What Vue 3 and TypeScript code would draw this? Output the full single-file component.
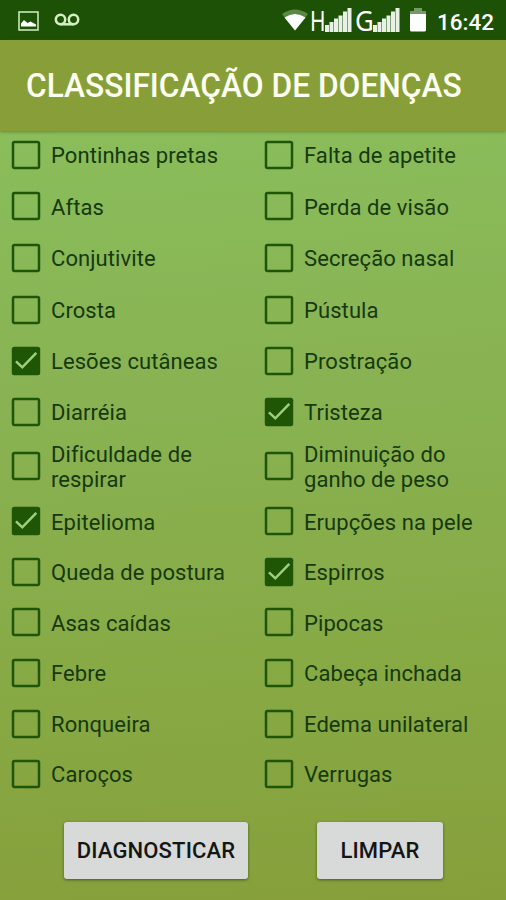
<script setup lang="ts">
import { reactive } from 'vue'

interface Symptom {
  label: string
  checked: boolean
}

const item = (label: string, checked = false): Symptom => ({ label, checked })

const symptoms = reactive<Symptom[]>([
  item('Pontinhas pretas'), item('Falta de apetite'),
  item('Aftas'), item('Perda de visão'),
  item('Conjutivite'), item('Secreção nasal'),
  item('Crosta'), item('Pústula'),
  item('Lesões cutâneas', true), item('Prostração'),
  item('Diarréia'), item('Tristeza', true),
  item('Dificuldade de respirar'), item('Diminuição do ganho de peso'),
  item('Epitelioma', true), item('Erupções na pele'),
  item('Queda de postura'), item('Espirros', true),
  item('Asas caídas'), item('Pipocas'),
  item('Febre'), item('Cabeça inchada'),
  item('Ronqueira'), item('Edema unilateral'),
  item('Caroços'), item('Verrugas'),
])

function clearAll(): void {
  symptoms.forEach((s) => { s.checked = false })
}
</script>

<template>
  <div class="screen">
    <div class="status">
      <svg class="picture" viewBox="0 0 21 20">
        <rect x="1" y="1" width="19" height="18" fill="none" stroke="#c9e8b8" stroke-width="1.6" />
        <path d="M3 15.500V12.500L6 9L9.500 12L12.500 10.500L18 13.500V15.500Z" fill="#fff" />
      </svg>
      <svg class="voicemail" viewBox="0 0 26 14">
        <g fill="none" stroke="#d5efc5" stroke-width="2.5">
          <circle cx="6.500" cy="6.500" r="4.700" />
          <circle cx="19.500" cy="6.500" r="4.700" />
          <path d="M6.500 11.300H19.500" />
        </g>
      </svg>
      <span class="spacer"></span>
      <svg class="wifi" viewBox="0 0 26 22">
        <path d="M0 5Q13 -4 26 5L13 21.500Z" fill="#5d8747" />
        <path d="M2.500 8.500Q13 1.500 23.500 8.500L13 21.500Z" fill="#fff" />
      </svg>
      <span class="net net-h">H</span>
      <svg class="signal" viewBox="0 0 27 26">
        <path d="M0 25V18H4V25ZM4.500 25V15H8.500V25ZM9 25V11.500H13V25ZM13.500 25V8.500H17.500V25ZM18 25V4.500H22V25ZM22.500 25V1H26.500V25Z" fill="#e9f0e5" />
      </svg>
      <span class="net net-g">G</span>
      <svg class="signal" viewBox="0 0 27 26">
        <path d="M0 25V18H4V25ZM4.500 25V15H8.500V25ZM9 25V11.500H13V25ZM13.500 25V8.500H17.500V25ZM18 25V4.500H22V25ZM22.500 25V1H26.500V25Z" fill="#e9f0e5" />
      </svg>
      <svg class="battery" viewBox="0 0 16 24">
        <path d="M4 0H12V3H16V6H0V3H4Z" fill="#76996a" />
        <path d="M0 6H16V22Q16 23.500 14.500 23.500H1.500Q0 23.500 0 22Z" fill="#fff" />
      </svg>
      <span class="clock">16:42</span>
    </div>

    <header class="bar"><h1>CLASSIFICAÇÃO DE DOENÇAS</h1></header>

    <main class="grid">
      <label v-for="s in symptoms" :key="s.label" class="item">
        <input v-model="s.checked" type="checkbox" class="native" />
        <svg class="box" viewBox="0 0 30 30">
          <rect v-if="!s.checked" x="2" y="2" width="26" height="26" rx="1.500" fill="none" stroke="#1f5606" stroke-width="2.500" />
          <template v-else>
            <rect x="0.800" y="0.800" width="28.400" height="28.400" rx="2.500" fill="#1f5606" />
            <path d="M5 15.300L11.300 21.300L25.300 6.800" fill="none" stroke="#9fce7c" stroke-width="2.500" />
          </template>
        </svg>
        <span class="text">{{ s.label }}</span>
      </label>
    </main>

    <footer class="actions">
      <button class="btn diagnose" type="button">DIAGNOSTICAR</button>
      <button class="btn clear" type="button" @click="clearAll">LIMPAR</button>
    </footer>
  </div>
</template>

<style>
body {
  margin: 0;
}
</style>

<style scoped>
.screen {
  width: 506px;
  height: 900px;
  overflow: hidden;
  display: flex;
  flex-direction: column;
  box-sizing: border-box;
  font-family: Roboto, "Liberation Sans", sans-serif;
  background: linear-gradient(176deg, #8abd5b 14%, #89b353 42%, #87a944 75%, #869f3b 100%);
}
.status {
  height: 40px;
  flex: none;
  display: flex;
  align-items: center;
  background: #1d5206;
  color: #fff;
  padding: 0 12px 0 18px;
}
.status svg {
  flex: none;
}
.picture {
  width: 21px;
  height: 20px;
  margin-top: 1px;
}
.voicemail {
  width: 26px;
  height: 14px;
  margin-left: 15px;
}
.spacer {
  flex: 1;
}
.wifi {
  width: 26px;
  height: 22px;
}
.net {
  font-family: "Noto Sans", sans-serif;
  font-size: 28px;
  line-height: 40px;
  transform-origin: left center;
}
.net-h {
  width: 15px;
  margin-left: 2px;
  transform: scaleX(0.75);
}
.net-g {
  width: 18px;
  margin-left: 3px;
  transform: scaleX(0.92);
}
.signal {
  width: 27px;
  height: 26px;
}
.battery {
  width: 16px;
  height: 24px;
  margin-left: 10px;
}
.clock {
  width: 57px;
  margin-left: 11px;
  padding-top: 3px;
  font-size: 22.500px;
  font-weight: 500;
  line-height: 40px;
  white-space: nowrap;
}
.bar {
  height: 91px;
  flex: none;
  display: flex;
  align-items: center;
  padding-left: 26px;
  background: #889f39;
  box-shadow: 0 1px 3px rgba(70, 90, 20, 0.5);
}
h1 {
  margin: 0;
  font-size: 33px;
  font-weight: 500;
  line-height: 40px;
  color: #fdfff0;
  white-space: nowrap;
  transform: scaleX(0.96);
  transform-origin: left center;
}
.grid {
  display: grid;
  flex: none;
  grid-template-columns: 253px 253px;
  grid-template-rows: repeat(4, 51.6px) 51px 50.6px 59px repeat(6, 50.6px);
  margin-top: -2px;
}
.item {
  display: flex;
  align-items: center;
  padding-left: 11px;
}
.native {
  appearance: none;
  width: 0;
  height: 0;
  margin: 0;
}
.box {
  width: 30px;
  height: 30px;
  flex: none;
}
.text {
  width: 180px;
  margin-left: 10px;
  padding-top: 2px;
  font-size: 22px;
  line-height: 25.5px;
  letter-spacing: 0.08px;
  color: #16390f;
}
.actions {
  display: flex;
  flex: none;
  margin-top: 22px;
  padding-left: 64px;
}
.btn {
  height: 57px;
  box-sizing: border-box;
  padding: 1px 0 0;
  border: 0;
  border-radius: 3px;
  background: #d8dad9;
  box-shadow: 0 1px 3px rgba(40, 55, 10, 0.65);
  font-family: inherit;
  font-size: 22px;
  font-weight: 500;
  letter-spacing: 0.15px;
  color: #141615;
}
.diagnose {
  width: 184px;
}
.clear {
  width: 126px;
  margin-left: 69px;
}
</style>
